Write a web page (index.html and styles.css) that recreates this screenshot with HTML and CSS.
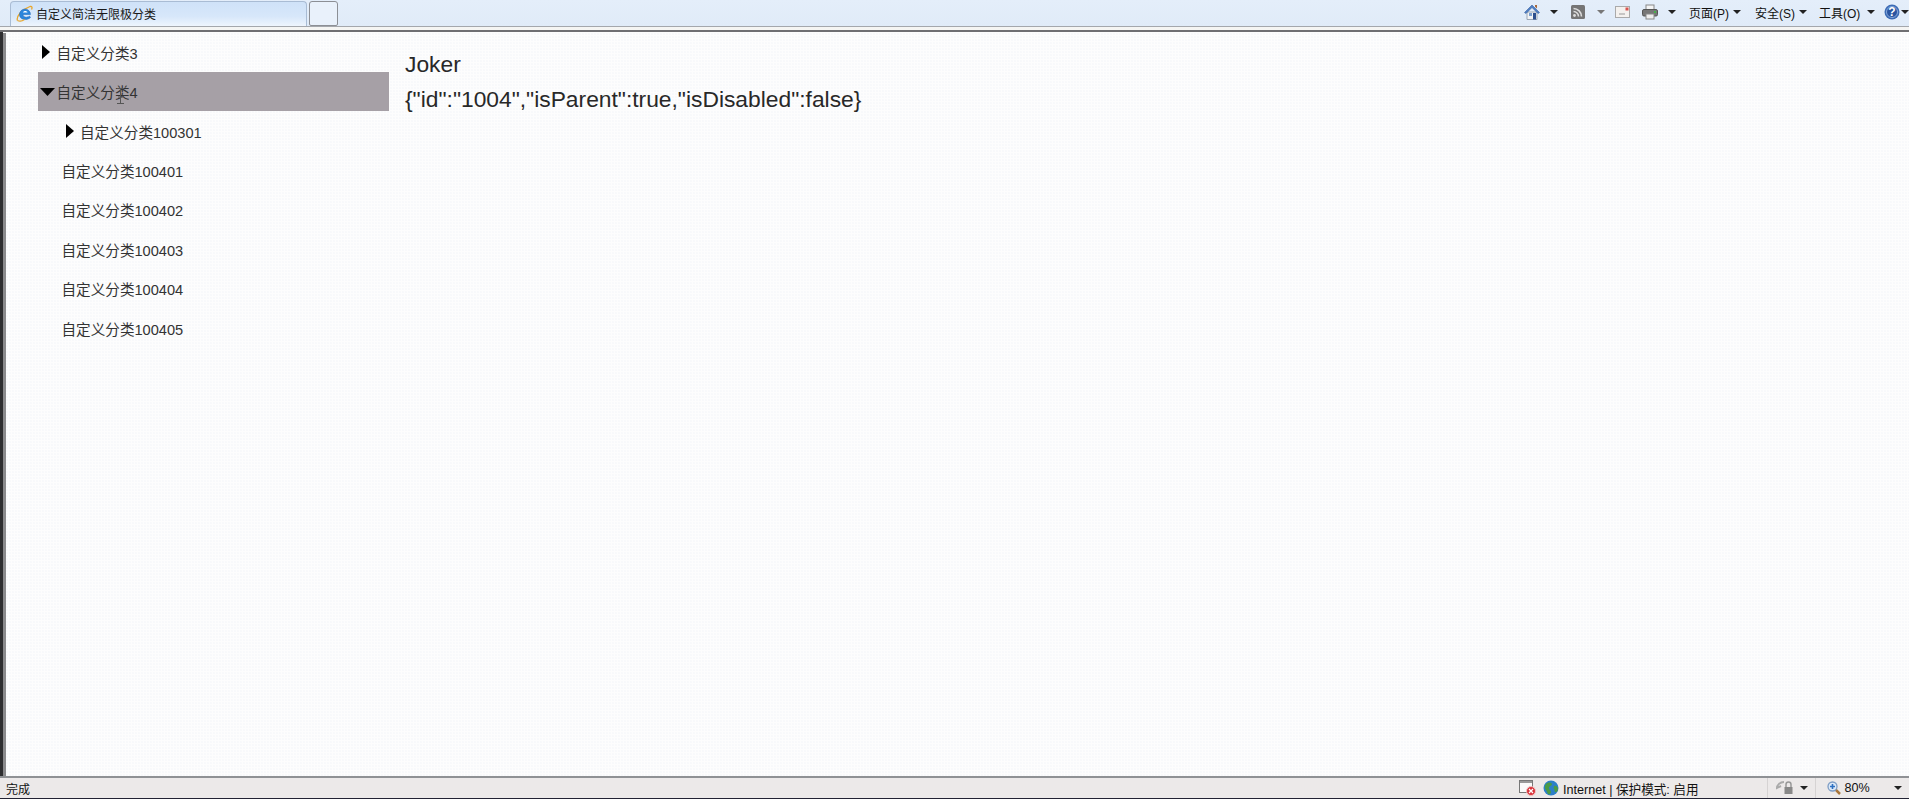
FILE: index.html
```html
<!DOCTYPE html>
<html lang="zh-CN">
<head>
<meta charset="utf-8">
<title>自定义简洁无限极分类</title>
<link rel="stylesheet" href="styles.css">
</head>
<body>
<div class="window">
  <header class="chrome">
    <div class="tabs">
      <div class="tab">
        <svg class="ie" viewBox="0 0 17 17" width="17" height="17"><path d="M1.500 15.500C0 12 5 5 14 1.500c2-.5 2.500 1 1.500 3" fill="none" stroke="#e9a62a" stroke-width="1.300"/><path d="M3.500 9.500a5.500 5.500 0 0 1 11 0H7c0 3 4.500 3.500 6.500 1.500l1 1.500c-3.500 3.500-11 2.500-11-3z" fill="#2b86dc" stroke="#1c64b4" stroke-width=".5"/><path d="M7 7.500c.5-2 4-2 4.500 0z" fill="#fff"/><path d="M1.500 15.500c2 1 5 .5 7-1" fill="none" stroke="#e9a62a" stroke-width="1.200"/></svg>
        <span>自定义简洁无限极分类</span>
      </div>
      <div class="newtab"></div>
      <nav class="commands">
        <svg class="cmd home" viewBox="0 0 16 16" width="16" height="16"><path d="M3 8h10v7.500H3z" fill="#f1f3f5" stroke="#9aa6b5"/><path d="M.5 8.500L8 1l7.500 7.500-1.500 1L8 3.500l-6 6z" fill="#4d7fc4" stroke="#3a5f9e" stroke-width=".6"/><path d="M5 9h3v3H5z" fill="#7ca0d0"/><path d="M9 9h3v6.500H9z" fill="#2d4f8e"/><path d="M11 1h2v3.500l-2-1.800z" fill="#a9683a"/></svg>
        <i class="arrow a-home"></i>
        <svg class="cmd rss" viewBox="0 0 14 14" width="14" height="14"><rect width="14" height="14" rx="1.500" fill="#757575"/><circle cx="3.500" cy="10.500" r="1.400" fill="#ddd"/><path d="M2.500 6.500a5 5 0 0 1 5 5M2.500 3.500a8 8 0 0 1 8 8" fill="none" stroke="#ddd" stroke-width="1.600"/></svg>
        <i class="arrow dim a-rss"></i>
        <svg class="cmd mail" viewBox="0 0 15 12" width="15" height="12"><rect x=".5" y=".5" width="14" height="11" fill="#f4f1ee" stroke="#aaa"/><path d="M4 8h6" stroke="#999"/><rect x="10.500" y="1.500" width="3" height="3" fill="#d9544f"/></svg>
        <svg class="cmd print" viewBox="0 0 16 16" width="16" height="16"><rect x="4" y="1" width="8" height="5" fill="#f4f4f4" stroke="#888"/><rect x=".5" y="5.500" width="15" height="6.500" rx="1.500" fill="#777" stroke="#555"/><rect x="4" y="10" width="8" height="5" fill="#eee" stroke="#888"/><rect x="12" y="7" width="2" height="2" fill="#46b04a"/></svg>
        <i class="arrow a-print"></i>
        <span class="menu m-page">页面(P)</span><i class="arrow a-menu"></i>
        <span class="menu m-safe">安全(S)</span><i class="arrow a-menu"></i>
        <span class="menu m-tool">工具(O)</span><i class="arrow a-tool"></i>
        <svg class="cmd help" viewBox="0 0 16 16" width="16" height="16"><circle cx="8" cy="8" r="7.500" fill="#3d6cb5"/><circle cx="8" cy="8" r="5.500" fill="#2a55a0" stroke="#86a8dc"/><text x="8" y="12" class="help-q">?</text></svg>
        <i class="arrow a-help"></i>
      </nav>
    </div>
  </header>

  <main class="page">
    <aside class="sidebar">
      <ul class="tree">
        <li class="row">
          <span class="exp"><svg viewBox="0 0 8 14" width="8" height="14"><path d="M0 0l8 7-8 7z"/></svg></span>自定义分类3
        </li>
        <li class="row selected">
          <span class="exp"><svg class="open" viewBox="0 0 15 8" width="15" height="8"><path d="M0 0h15l-7.500 8z"/></svg></span>自定义分类4
          <svg class="ibeam" viewBox="0 0 7 16" width="7" height="16"><path d="M0 .5h7M0 15.500h7M3.500 0v16M1 9h5" stroke="#555" fill="none"/></svg>
        </li>
        <li class="row child">
          <span class="exp"><svg viewBox="0 0 8 14" width="8" height="14"><path d="M0 0l8 7-8 7z"/></svg></span>自定义分类100301
        </li>
        <li class="row child">自定义分类100401</li>
        <li class="row child">自定义分类100402</li>
        <li class="row child">自定义分类100403</li>
        <li class="row child">自定义分类100404</li>
        <li class="row child">自定义分类100405</li>
      </ul>
    </aside>
    <section class="detail">
      <div>Joker</div>
      <div>{"id":"1004","isParent":true,"isDisabled":false}</div>
    </section>
  </main>

  <footer class="status">
    <span class="done">完成</span>
    <svg class="popup" viewBox="0 0 17 16" width="17" height="16"><rect x=".5" y=".5" width="13" height="12" fill="#fafafa" stroke="#777"/><rect x="1" y="1" width="12" height="2" fill="#999"/><circle cx="12" cy="11" r="4.500" fill="#d8323a" stroke="#f2c4c4"/><path d="M10 9l4 4M14 9l-4 4" stroke="#fff" stroke-width="1.300"/></svg>
    <svg class="globe" viewBox="0 0 16 16" width="16" height="16"><circle cx="8" cy="8" r="7.500" fill="#2c7fc9"/><path d="M3 4c2-2 5-2 6 0 0 2-3 2-3 4s2 2 2 4-2 3-3 2-1-3-2-4-2-4 0-6zM11 6c2-1 4 1 4 3s-2 4-3 3 0-2-1-3 0-2 0-3z" fill="#4a9a45"/></svg>
    <span class="zone">Internet | 保护模式: 启用</span>
    <i class="sep s-a"></i>
    <svg class="lock" viewBox="0 0 18 16" width="18" height="16"><path d="M8 2C4 2 1 5 1 8l4-2" fill="none" stroke="#aaa" stroke-width="2"/><path d="M10 7V4.500a2.500 2.500 0 0 1 5 0V7" fill="none" stroke="#999" stroke-width="1.500"/><rect x="8.500" y="7" width="8" height="7" fill="#888"/></svg>
    <i class="arrow a-lock"></i>
    <i class="sep s-b"></i>
    <svg class="zoomglass" viewBox="0 0 14 14" width="14" height="14"><path d="M8 8l5 5" stroke="#a9763c" stroke-width="2.500"/><circle cx="5.500" cy="5.500" r="4.500" fill="#dce9f8" stroke="#7d9cc4" stroke-width="1.300"/><path d="M3 5.500h5M5.500 3v5" stroke="#2d6fc0" stroke-width="1.600"/></svg>
    <span class="pct">80%</span>
    <i class="arrow a-zoom"></i>
  </footer>
</div>
</body>
</html>
```

FILE: styles.css
```css
* { box-sizing: border-box; }
html, body { margin: 0; height: 100%; overflow: hidden; }
body { font-family: "Liberation Sans", "Noto Sans CJK SC", sans-serif; color: #222; }
ul { list-style: none; margin: 0; padding: 0; }

.window { display: flex; flex-direction: column; height: 799px; background-color: #fdfdfd; background-image: radial-gradient(circle at 1px 1px, #f8f9fb .7px, transparent .8px); background-size: 3px 3px; }

/* browser chrome */
.chrome { flex: none; height: 32px; background: #f5f5f3; border-bottom: 2px solid #6f6f72; }
.tabs { display: flex; align-items: flex-start; height: 27px; padding: 1px 0 0 10px; background: linear-gradient(#e4eefa, #e0ebf8); border-bottom: 1px solid #a4a7ac; }
.tab { flex: none; width: 297px; height: 25px; display: flex; align-items: center; gap: 3px; padding: 0 0 2px 5px; font-size: 12px; color: #1a1a1a; background: linear-gradient(#cfe2f8, #d7e7fa 60%, #eef5fd); border: 1px solid #a9bcd4; border-bottom: 0; border-radius: 4px 4px 0 0; }
.newtab { flex: none; width: 29px; height: 25px; margin-left: 2px; background: #e9f1fb; border: 1px solid #8c8f95; border-radius: 3px 3px 2px 2px; }
.commands { flex: 1; min-width: 0; display: flex; align-items: center; height: 22px; font-size: 12px; color: #111; }
.commands svg { flex: none; }
.home { margin-left: 1186px; }
.arrow { flex: none; width: 0; height: 0; border: 4px solid transparent; border-top-color: #222; border-bottom-width: 0; }
.arrow.dim { border-top-color: #777; }
.commands .a-home { margin-left: 10px; }
.rss { margin-left: 13px; }
.commands .a-rss { margin-left: 12px; }
.mail { margin-left: 10px; }
.print { margin-left: 12px; }
.commands .a-print { margin-left: 10px; }
.commands .a-menu { margin-left: 4px; }
.commands .a-tool { margin-left: 7px; }
.menu { white-space: nowrap; }
.m-page { margin-left: 13px; }
.m-safe { margin-left: 14px; }
.m-tool { margin-left: 12px; }
.help { margin-left: 9px; }
.commands .a-help { margin-left: 1px; }
.help-q { font-size: 12px; font-weight: bold; fill: #fff; text-anchor: middle; }

/* page */
.page { flex: 1; min-height: 0; display: flex; border-left: 3px solid #2e2e30; padding-top: .6px; }
.sidebar { flex: none; width: 386px; padding-left: 32px; border-left: 3px solid #8a8a8c; }
.row { position: relative; height: 39.4px; display: flex; align-items: center; font-size: 14.6px; color: #333; }
.row.selected { background: #a6a0a6; }
.row.child { padding-left: 23.5px; }
.exp { flex: none; width: 18.5px; display: flex; justify-content: center; align-items: center; }
.exp svg { fill: #000; margin-left: -2px; }
.exp .open { margin-left: 0; }
.ibeam { position: absolute; left: 79px; top: 16px; }
.detail { margin-left: 16px; padding-top: 14px; font-size: 22.8px; line-height: 35px; color: #282828; }

/* status bar */
.status { flex: none; height: 23px; display: flex; align-items: center; background: #ece9e9; border-top: 2px solid #8f9194; border-bottom: 1px solid #223; font-size: 12px; color: #111; }
.done { margin-left: 6px; }
.popup { margin-left: 1489px; }
.globe { margin-left: 7px; }
.zone { margin-left: 4px; font-size: 12.6px; white-space: nowrap; }
.sep { flex: none; width: 1px; height: 20px; background: #d6d3d3; }
.s-a { margin-left: 68px; }
.lock { margin-left: 8px; }
.status .a-lock { margin-left: 6px; }
.s-b { margin-left: 7px; }
.zoomglass { margin-left: 11px; }
.pct { margin-left: 4px; font-size: 12.6px; }
.status .a-zoom { margin-left: 24px; }
```
